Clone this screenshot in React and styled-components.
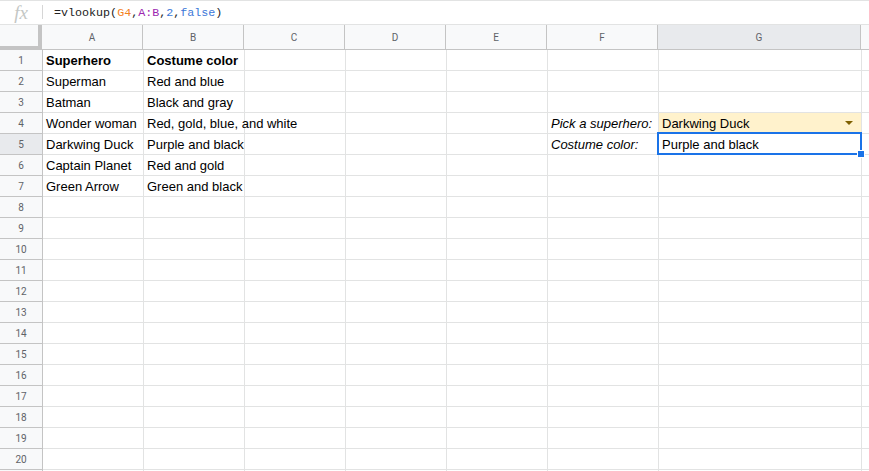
import React from 'react';
import styled, { createGlobalStyle } from 'styled-components';

const GlobalStyle = createGlobalStyle`
  html, body {
    margin: 0;
    padding: 0;
    background: #fff;
    overflow: hidden;
  }
  body {
    font-family: 'Liberation Sans', Arial, sans-serif;
  }
`;

const COLS = [
  { key: 'A', width: 101 },
  { key: 'B', width: 101 },
  { key: 'C', width: 101 },
  { key: 'D', width: 101 },
  { key: 'E', width: 101 },
  { key: 'F', width: 111 },
  { key: 'G', width: 203 },
  { key: 'H', width: 100 },
];

const DATA = {
  1: { A: 'Superhero', B: 'Costume color' },
  2: { A: 'Superman', B: 'Red and blue' },
  3: { A: 'Batman', B: 'Black and gray' },
  4: { A: 'Wonder woman', B: 'Red, gold, blue, and white', F: 'Pick a superhero:', G: 'Darkwing Duck' },
  5: { A: 'Darkwing Duck', B: 'Purple and black', F: 'Costume color:', G: 'Purple and black' },
  6: { A: 'Captain Planet', B: 'Red and gold' },
  7: { A: 'Green Arrow', B: 'Green and black' },
};

const Sheet = styled.div`
  width: 869px;
  height: 471px;
  overflow: hidden;
  background: #fff;
`;

const FormulaBar = styled.div`
  display: flex;
  align-items: center;
  height: 25px;
  border-top: 1px solid #e2e3e3;
  border-bottom: 1px solid #e2e3e3;
  box-sizing: border-box;
`;

const FxLabel = styled.div`
  width: 42px;
  display: flex;
  align-items: center;
  justify-content: center;
  font-family: 'Liberation Serif', 'Times New Roman', serif;
  font-style: italic;
  font-size: 19px;
  color: #c4c7c5;
  position: relative;
  padding-right: 1px;
  &::after {
    content: '';
    position: absolute;
    right: 0;
    top: 3px;
    height: 14px;
    border-right: 1px solid #d6d6d6;
  }
`;

const Formula = styled.div`
  padding-left: 11px;
  font-family: 'Liberation Mono', 'Courier New', monospace;
  font-size: 11.7px;
  color: #222;
`;

const Tok = styled.span`
  color: ${p => p.$c};
`;

const Row = styled.div`
  display: flex;
  height: ${p => (p.$header ? 25 : 21)}px;
`;

const Corner = styled.div`
  width: 42px;
  flex: none;
  box-sizing: border-box;
  background: #f8f9fa;
  border-right: 4px solid #c4c4c4;
  border-bottom: 4px solid #c4c4c4;
`;

const ColHead = styled.div`
  width: ${p => p.$w}px;
  flex: none;
  box-sizing: border-box;
  background: ${p => (p.$active ? '#e8eaed' : '#f8f9fa')};
  border-right: 1px solid #c4c4c4;
  border-bottom: 1px solid #c4c4c4;
  display: flex;
  align-items: center;
  justify-content: center;
  font-family: Roboto, 'Liberation Sans', sans-serif;
  font-size: 10px;
  color: #5f6368;
  padding-top: 1px;
`;

const RowHead = styled.div`
  width: 43px;
  flex: none;
  box-sizing: border-box;
  background: ${p => (p.$active ? '#e8eaed' : '#f8f9fa')};
  border-right: 1px solid #c4c4c4;
  border-bottom: 1px solid #c4c4c4;
  display: flex;
  align-items: center;
  justify-content: center;
  font-family: Roboto, 'Liberation Sans', sans-serif;
  font-size: 10px;
  color: #5f6368;
  padding-top: 1px;
`;

const Cell = styled.div`
  width: ${p => p.$w}px;
  flex: none;
  box-sizing: border-box;
  position: relative;
  border-right: 1px solid #e2e3e3;
  border-bottom: 1px solid #e2e3e3;
  background: ${p => p.$bg || '#fff'};
  padding: 0 3px;
  display: flex;
  align-items: center;
  font-size: 13px;
  font-weight: ${p => (p.$bold ? 700 : 400)};
  font-style: ${p => (p.$italic ? 'italic' : 'normal')};
  color: #000;
  white-space: nowrap;
  z-index: ${p => (p.$over ? 1 : 0)};
`;

const DropArrow = styled.span`
  position: absolute;
  right: 8px;
  top: 8px;
  width: 0;
  height: 0;
  border-left: 4px solid transparent;
  border-right: 4px solid transparent;
  border-top: 4px solid #7f6000;
`;

const Selection = styled.div`
  position: absolute;
  left: -2px;
  top: -2px;
  right: -1px;
  bottom: -1px;
  border: 2px solid #1a73e8;
  pointer-events: none;
`;

const FillHandle = styled.div`
  position: absolute;
  right: -5px;
  bottom: -5px;
  width: 6px;
  height: 6px;
  background: #1a73e8;
  border: 1px solid #fff;
`;

function renderCell(row, col) {
  const value = DATA[row] && DATA[row][col.key];
  const bold = row === 1 && (col.key === 'A' || col.key === 'B');
  const italic = col.key === 'F' && Boolean(value);
  const isDropdown = row === 4 && col.key === 'G';
  const isActive = row === 5 && col.key === 'G';
  return (
    <Cell
      key={col.key}
      $w={col.width}
      $bold={bold}
      $italic={italic}
      $bg={isDropdown ? '#fff2cc' : undefined}
      $over={isActive || (row === 4 && col.key === 'B')}
    >
      {value && <span>{value}</span>}
      {isDropdown && <DropArrow />}
      {isActive && (
        <Selection>
          <FillHandle />
        </Selection>
      )}
    </Cell>
  );
}

export default function App() {
  const rows = Array.from({ length: 21 }, (_, i) => i + 1);
  return (
    <Sheet>
      <GlobalStyle />
      <FormulaBar>
        <FxLabel>fx</FxLabel>
        <Formula>
          =vlookup(<Tok $c="#f4811f">G4</Tok>,<Tok $c="#9c27b0">A:B</Tok>,
          <Tok $c="#3c78d8">2</Tok>,<Tok $c="#3c78d8">false</Tok>)
        </Formula>
      </FormulaBar>
      <Row $header>
        <Corner />
        {COLS.map(col => (
          <ColHead key={col.key} $w={col.width} $active={col.key === 'G'}>
            {col.key === 'H' ? '' : col.key}
          </ColHead>
        ))}
      </Row>
      {rows.map(r => (
        <Row key={r}>
          <RowHead $active={r === 5}>{r <= 20 ? r : ''}</RowHead>
          {COLS.map(col => renderCell(r, col))}
        </Row>
      ))}
    </Sheet>
  );
}
